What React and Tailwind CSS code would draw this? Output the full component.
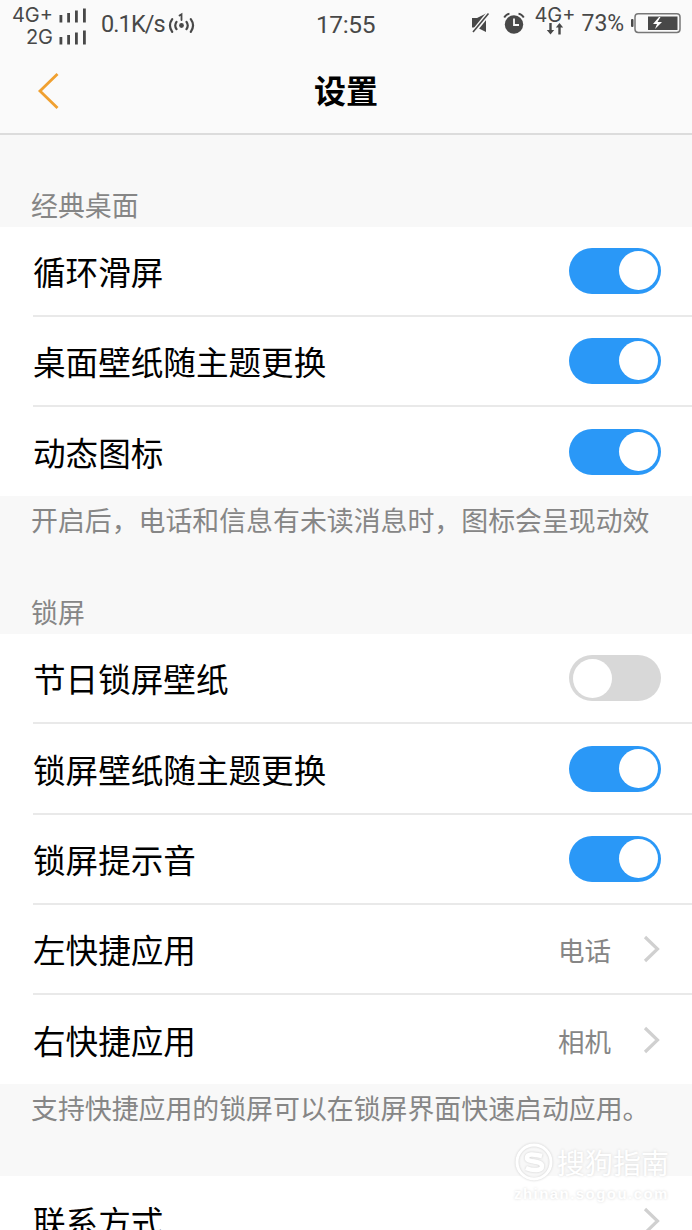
const CLASSIC = [
  { id: 'loop', label: '循环滑屏', on: true },
  { id: 'wallpaper', label: '桌面壁纸随主题更换', on: true },
  { id: 'icons', label: '动态图标', on: true },
];

const LOCK = [
  { id: 'holiday', label: '节日锁屏壁纸', on: false },
  { id: 'lockpaper', label: '锁屏壁纸随主题更换', on: true },
  { id: 'sound', label: '锁屏提示音', on: true },
  { id: 'left', label: '左快捷应用', value: '电话' },
  { id: 'right', label: '右快捷应用', value: '相机' },
];

function Signal() {
  return (
    <svg width="28" height="15" viewBox="0 0 28 15" fill="#484848">
      <rect x="0.5" y="7" width="2.8" height="7.5" />
      <rect x="8.2" y="5" width="2.8" height="9.5" />
      <rect x="16" y="2.5" width="2.8" height="12" />
      <rect x="24" y="0.5" width="2.8" height="14" />
    </svg>
  );
}

function StatusBar() {
  return (
    <div className="flex h-12 items-start font-['Roboto','Noto_Sans_CJK_SC',sans-serif] text-[#484848]">
      <div className="ml-[9px] mt-1 flex w-[44px] flex-col items-end font-['Inter',sans-serif] text-[20px] leading-[22px]">
        <div>4G+</div>
        <div>2G</div>
      </div>
      <div className="ml-[6px] mt-2 flex flex-col gap-[7px]">
        <Signal />
        <Signal />
      </div>
      <div className="ml-[14px] mt-2 w-[67px] text-[23.5px] leading-8 tracking-[-0.9px]">0.1K/s</div>
      <svg className="mt-3" width="28" height="24" viewBox="0 0 28 24" fill="none" stroke="#484848" strokeWidth="2.2" strokeLinecap="round">
        <circle cx="13.5" cy="13.5" r="2.4" fill="#484848" stroke="none" />
        <path d="M8.5 9.8Q6 13.5 8.5 17.2M18.5 9.8q2.500 3.700 0 7.400M4.200 7.200q-4.500 6.300 0 12.600M22.800 7.200q4.500 6.300 0 12.600" />
        <path d="M11.5 3.5l2-1.200V8" strokeWidth="1.8" />
      </svg>
      <div className="ml-[120px] mt-[9px] w-[64px] text-[24.5px] leading-8 tracking-[-0.4px]">17:55</div>

      <svg className="ml-[91px] mt-3 shrink-0" width="20" height="22" viewBox="0 0 20 22">
        <path d="M1 6h5L15 1.500v18.500L6 15.500H1z" fill="#484848" />
        <path d="M2 20.5L17.5 1.5" stroke="#fafafa" strokeWidth="4.400" />
        <path d="M2 20L17.5 1.5" stroke="#484848" strokeWidth="1.6" />
      </svg>
      <svg className="ml-[11.5px] mt-3 shrink-0" width="22" height="23" viewBox="0 0 22 23" fill="none">
        <circle cx="11" cy="12.5" r="9.2" fill="#484848" />
        <path d="M11 6.500v6.500h5" stroke="#fafafa" strokeWidth="1.8" />
        <path d="M1.2 5.5Q3 2.3 6.5 1.6M15.5 1.6Q19 2.3 20.800 5.500" stroke="#484848" strokeWidth="1.9" />
      </svg>
      <div className="ml-[9px] mt-1 flex w-[43px] flex-col items-center">
        <div className="font-['Inter',sans-serif] text-[20px] leading-[22px]">4G+</div>
        <svg className="-mt-[3px]" width="18" height="12" viewBox="0 0 18 12" fill="#484848">
          <path d="M3.3 0h2.4v7h2.5L4.5 11.5.8 7h2.5z" />
          <path d="M12.3 11.5h2.4v-7h2.5L13.500 0 9.8 4.5h2.5z" />
        </svg>
      </div>
      <div className="ml-[5px] mt-2 w-[49px] text-[23px] leading-8">73%</div>
      <svg className="mt-3 shrink-0" width="51" height="22" viewBox="0 0 51 22">
        <rect x="0" y="7" width="2.5" height="8" rx="1" fill="#484848" />
        <rect x="4" y="1.8" width="45" height="18.6" rx="3.2" fill="none" stroke="#777" strokeWidth="1.5" />
        <rect x="17" y="4.5" width="29.5" height="13.5" fill="#484848" />
        <path d="M28 5l-6 7h4l-2 5 7-7h-4.500l3-5z" fill="#fff" />
      </svg>
    </div>
  );
}

function Toggle({ on }) {
  return (
    <div className={`flex h-[46px] w-[92px] items-center rounded-full px-[3.500px] ${on ? 'justify-end bg-[#2a98f7]' : 'justify-start bg-[#d8d8d8]'}`}>
      <div className="size-[39px] rounded-full bg-white" />
    </div>
  );
}

function Chevron() {
  return (
    <svg width="18" height="28" viewBox="0 0 18 28" fill="none" stroke="#d0d0d0" strokeWidth="3.200">
      <path d="M2 2l12.500 12L2 26" />
    </svg>
  );
}

function Row({ item, last }) {
  return (
    <div className={`ml-[33px] flex items-center justify-between pr-[31px] ${last ? 'h-[89px]' : 'h-[90.3px] border-b-2 border-[#e9e9e9]'}`}>
      <span className="text-[32.6px] leading-[48px] text-black">{item.label}</span>
      {item.on === undefined ? (
        <div className="flex items-center gap-[32px]">
          <span className="mt-0.5 text-[26.5px] leading-10 text-[#868686]">{item.value}</span>
          <Chevron />
        </div>
      ) : (
        <Toggle on={item.on} />
      )}
    </div>
  );
}

function Group({ items }) {
  return (
    <div className="bg-white">
      {items.map((item, i) => (
        <Row key={item.id} item={item} last={i === items.length - 1} />
      ))}
    </div>
  );
}

function Watermark() {
  return (
    <div className="absolute left-[514px] top-[1142px] w-[160px] text-white [text-shadow:0_0_3px_#d8d8d8]">
      <div className="flex items-center gap-[3px]">
        <svg width="40" height="40" viewBox="0 0 40 40" fill="none" className="drop-shadow-[0_0_1px_#ccc]">
          <circle cx="20" cy="20" r="17" stroke="#fff" strokeWidth="3" />
          <path d="M28 14Q13 10 13 16c0 5 15 2 15 8 0 5-9 5-16 2" stroke="#fff" strokeWidth="4.500" />
        </svg>
        <span className="text-[28px] leading-10">搜狗指南</span>
      </div>
      <div className="font-['Liberation_Sans',sans-serif] text-[15px] font-bold leading-6 tracking-[1.450px]">zhinan.sogou.com</div>
    </div>
  );
}

export default function App() {
  return (
    <div className="relative h-[1230px] w-[692px] overflow-hidden bg-[#f8f8f8] font-['Noto_Sans_CJK_SC',sans-serif]">
      <header className="h-[134.500px] border-b-2 border-[#dcdcdc] bg-[#fafafa]">
        <StatusBar />
        <div className="grid h-[85px] grid-cols-[1fr_auto_1fr] items-center">
          <svg className="ml-[37px]" width="24" height="38" viewBox="0 0 24 38" fill="none" stroke="#f0a030" strokeWidth="2.8">
            <path d="M20.500 2L3 19l17.500 17" />
          </svg>
          <h1 className="-mt-1 text-[32px] font-bold leading-[48px] text-black">设置</h1>
        </div>
      </header>

      <div className="flex h-[92px] items-end pb-0.5 pl-[31px] text-[26.9px] leading-10 text-[#868686]">经典桌面</div>
      <Group items={CLASSIC} />
      <div className="flex h-[138px] flex-col justify-between pb-0.5 pl-[31px] pt-1 text-[26.9px] leading-10 text-[#868686]">
        <p>开启后，电话和信息有未读消息时，图标会呈现动效</p>
        <p>锁屏</p>
      </div>
      <Group items={LOCK} />
      <p className="h-[92px] pl-[31px] pt-1 text-[26.9px] leading-10 text-[#868686]">支持快捷应用的锁屏可以在锁屏界面快速启动应用。</p>
      <Group items={[{ id: 'contact', label: '联系方式', value: '' }]} />
      <Watermark />
    </div>
  );
}
